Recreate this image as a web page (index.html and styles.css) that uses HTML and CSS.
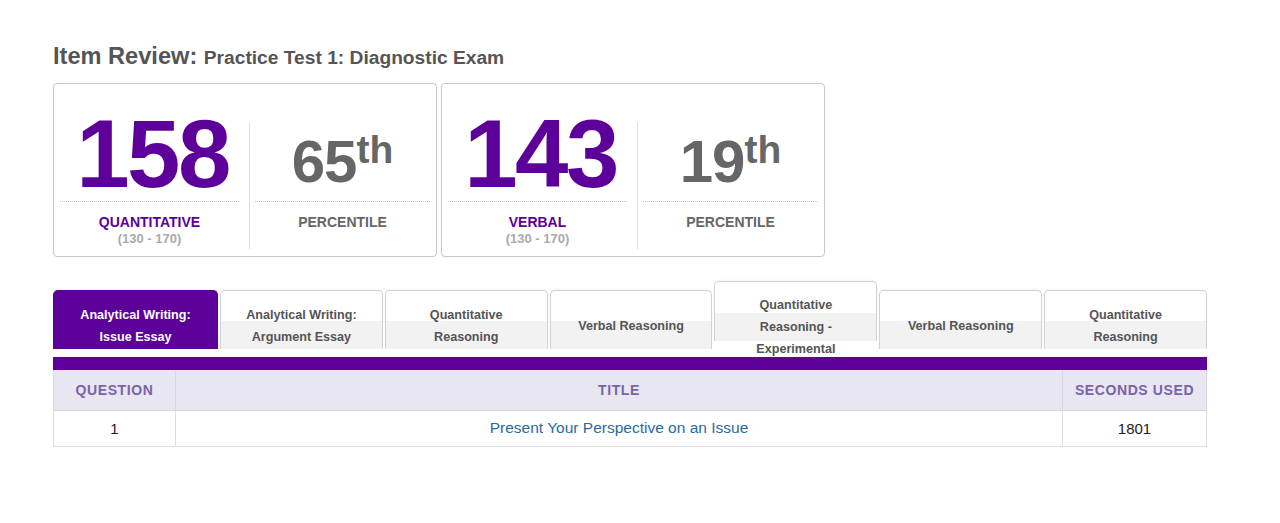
FILE: index.html
```html
<!DOCTYPE html>
<html>
<head>
<meta charset="utf-8">
<link rel="stylesheet" href="styles.css">
</head>
<body>
<main class="page">
  <h1 class="title">Item Review: <span class="title-sub">Practice Test 1: Diagnostic Exam</span></h1>

  <section class="cards">
    <div class="card">
      <div class="col col-left">
        <div class="num-area"><span class="score">158</span></div>
        <div class="label-area">
          <div class="label label-purple">QUANTITATIVE</div>
          <div class="range">(130 - 170)</div>
        </div>
      </div>
      <div class="divider"></div>
      <div class="col col-right">
        <div class="num-area"><span class="pct">65<sup class="th">th</sup></span></div>
        <div class="label-area">
          <div class="label label-gray">PERCENTILE</div>
        </div>
      </div>
    </div>
    <div class="card">
      <div class="col col-left">
        <div class="num-area"><span class="score">143</span></div>
        <div class="label-area">
          <div class="label label-purple">VERBAL</div>
          <div class="range">(130 - 170)</div>
        </div>
      </div>
      <div class="divider"></div>
      <div class="col col-right">
        <div class="num-area"><span class="pct">19<sup class="th">th</sup></span></div>
        <div class="label-area">
          <div class="label label-gray">PERCENTILE</div>
        </div>
      </div>
    </div>
  </section>

  <nav class="tabs">
    <div class="tab tab-active">Analytical Writing:<br>Issue Essay</div>
    <div class="tab">Analytical Writing:<br>Argument Essay</div>
    <div class="tab">Quantitative<br>Reasoning</div>
    <div class="tab">Verbal Reasoning</div>
    <div class="tab tab-tall">Quantitative<br>Reasoning -<br>Experimental</div>
    <div class="tab">Verbal Reasoning</div>
    <div class="tab">Quantitative<br>Reasoning</div>
  </nav>

  <div class="bar"></div>

  <table class="review">
    <thead>
      <tr>
        <th class="c-q">QUESTION</th>
        <th class="c-t">TITLE</th>
        <th class="c-s">SECONDS USED</th>
      </tr>
    </thead>
    <tbody>
      <tr>
        <td>1</td>
        <td><a class="link" href="#">Present Your Perspective on an Issue</a></td>
        <td>1801</td>
      </tr>
    </tbody>
  </table>
</main>
</body>
</html>
```

FILE: styles.css
```css
* { box-sizing: border-box; }
html, body { margin: 0; padding: 0; background: #fff; }
body { font-family: "Liberation Sans", Arial, sans-serif; color: #333; }

.page {
  width: 1154px;
  margin-left: 53px;
  padding-top: 42px;
}

.title {
  margin: 0;
  font-size: 23.6px;
  line-height: 28px;
  font-weight: bold;
  color: #555;
}
.title-sub { font-size: 19.2px; }

.cards {
  display: flex;
  gap: 4px;
  margin-top: 11px;
}
.card {
  width: 384px;
  height: 174px;
  border: 1px solid #c8c8c8;
  border-radius: 4px;
  display: flex;
  box-shadow: 0 0 2px rgba(0,0,0,0.06);
}
.col-left { width: 195px; padding: 0 10px 0 6px; }
.col-right { flex: 1; padding: 0 6px 0 5px; }
.divider {
  width: 1px;
  background: #e0e0e0;
  margin: 38px 0 7px;
}
.num-area {
  height: 118px;
  display: flex;
  justify-content: center;
  align-items: flex-end;
  border-bottom: 1px dotted #c4c4c4;
}
.score {
  font-size: 96px;
  line-height: 1;
  font-weight: bold;
  color: #5c0099;
  letter-spacing: -2.5px;
  margin-bottom: -1px;
  padding-left: 6px;
}
.pct {
  font-size: 60px;
  line-height: 1;
  font-weight: bold;
  color: #666;
  margin-bottom: 9px;
  letter-spacing: -1px;
}
.th {
  font-size: 39px;
  line-height: 0;
  vertical-align: 19px;
  letter-spacing: 0;
}
.label-area {
  padding-top: 12px;
  text-align: center;
}
.label {
  font-size: 14px;
  line-height: 17px;
  font-weight: bold;
}
.label-purple { color: #5c0099; }
.label-gray { color: #666; }
.range {
  font-size: 13px;
  line-height: 15px;
  font-weight: bold;
  color: #aaa;
}

.tabs {
  display: grid;
  grid-template-columns: 165px repeat(6, minmax(0, 1fr));
  align-items: start;
  column-gap: 2px;
  margin-top: 24px;
  height: 68px;
}
.tab {
  height: 59px;
  margin-top: 9px;
  padding: 13px 4px 2px;
  display: flex;
  flex-direction: column;
  justify-content: center;
  text-align: center;
  font-size: 12.6px;
  line-height: 22px;
  font-weight: bold;
  color: #555;
  border: 1px solid #d2d2d2;
  border-bottom: none;
  border-radius: 5px 5px 0 0;
  background: linear-gradient(to bottom, #fff 0, #fff calc(100% - 28px), #f2f2f2 calc(100% - 28px));
  box-shadow: 0 -1px 2px rgba(0,0,0,0.05);
}
.tab-active {
  background: #5c0099;
  border-color: #5c0099;
  color: #fff;
}
.tab-tall {
  height: 60px;
  margin-top: 0;
  padding-top: 12px;
  justify-content: flex-start;
}

.bar {
  height: 13px;
  background: #5c0099;
  margin-top: 8px;
}

.review {
  width: 100%;
  border-collapse: collapse;
  font-family: "Liberation Sans", Arial, sans-serif;
}
.review th {
  height: 40px;
  background: #e8e6f0;
  color: #7b62a9;
  font-size: 14px;
  font-weight: bold;
  letter-spacing: 0.6px;
  border: 1px solid #d8d6de;
  border-top: none;
  padding: 0;
}
.review td {
  height: 36px;
  text-align: center;
  font-size: 15px;
  color: #222;
  border: 1px solid #dedede;
  padding: 0;
}
.c-q { width: 122px; }
.c-s { width: 144px; }
.link {
  color: #2b6a9f;
  text-decoration: none;
  font-size: 15.5px;
}
```
